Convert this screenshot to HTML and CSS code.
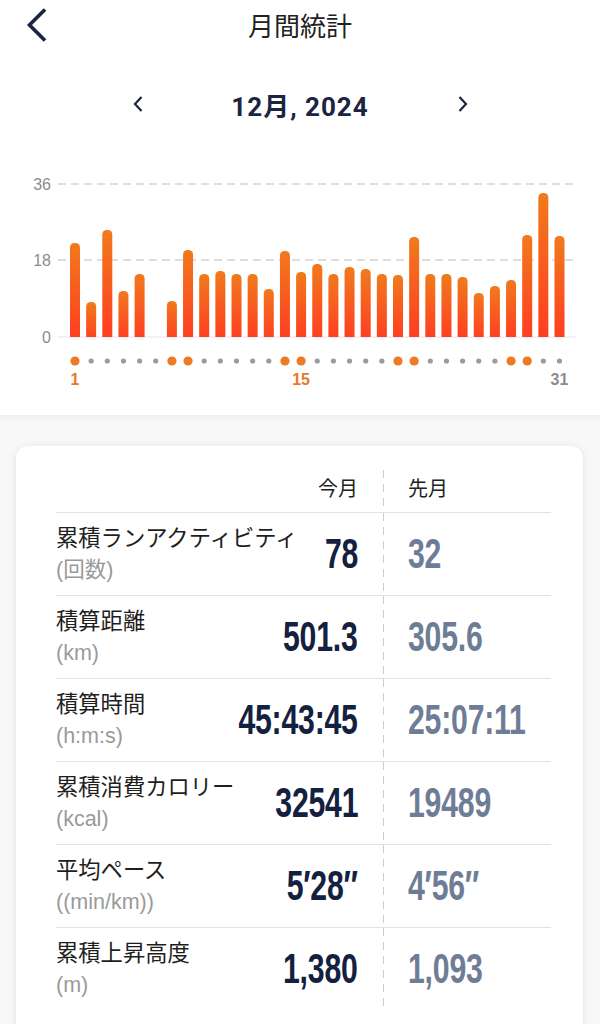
FILE: index.html
```html
<!DOCTYPE html>
<html lang="ja">
<head>
<meta charset="utf-8">
<title>月間統計</title>
<link rel="stylesheet" href="styles.css">
</head>
<body>
<div class="top">
  <header class="nav">
    <div class="back">
      <svg width="22" height="34" viewBox="0 0 22 34"><path d="M19 1.5 L3.5 17 L19 32.5" fill="none" stroke="#1b2440" stroke-width="3.6"/></svg>
    </div>
    <h1 class="title">月間統計</h1>
    <div></div>
  </header>
  <div class="month">
    <svg width="12" height="18" viewBox="0 0 12 18"><path d="M9.5 2 L3 9 L9.5 16" fill="none" stroke="#1b2440" stroke-width="2.2"/></svg>
    <span class="month-text">12月, 2024</span>
    <svg width="12" height="18" viewBox="0 0 12 18"><path d="M2.5 2 L9 9 L2.5 16" fill="none" stroke="#1b2440" stroke-width="2.2"/></svg>
  </div>
  <svg class="chart" width="600" height="275" viewBox="0 0 600 275">
    <defs>
      <linearGradient id="bar" x1="0" y1="0" x2="0" y2="1">
        <stop offset="0" stop-color="#f17a1c"/>
        <stop offset="1" stop-color="#ff3b22"/>
      </linearGradient>
      <clipPath id="clip"><rect x="0" y="0" width="600" height="211"/></clipPath>
    </defs>
    <g class="ylab">
      <text x="51" y="64">36</text>
      <text x="51" y="140">18</text>
      <text x="51" y="217">0</text>
    </g>
    <line x1="58" y1="58" x2="576" y2="58" class="grid"/>
    <line x1="58" y1="134" x2="576" y2="134" class="grid"/>
    <line x1="58" y1="211" x2="576" y2="211" class="base"/>
    <g clip-path="url(#clip)" fill="url(#bar)">
      <rect x="70" y="117" width="10" height="99" rx="4.5"/>
      <rect x="86.15" y="176" width="10" height="40" rx="4.5"/>
      <rect x="102.3" y="104" width="10" height="112" rx="4.5"/>
      <rect x="118.45" y="165" width="10" height="51" rx="4.5"/>
      <rect x="134.6" y="148" width="10" height="68" rx="4.5"/>
      <rect x="166.9" y="175" width="10" height="41" rx="4.5"/>
      <rect x="183.05" y="124" width="10" height="92" rx="4.5"/>
      <rect x="199.2" y="148" width="10" height="68" rx="4.5"/>
      <rect x="215.35" y="145" width="10" height="71" rx="4.5"/>
      <rect x="231.5" y="148" width="10" height="68" rx="4.5"/>
      <rect x="247.65" y="148" width="10" height="68" rx="4.5"/>
      <rect x="263.8" y="163" width="10" height="53" rx="4.5"/>
      <rect x="279.95" y="125" width="10" height="91" rx="4.5"/>
      <rect x="296.1" y="146" width="10" height="70" rx="4.5"/>
      <rect x="312.25" y="138" width="10" height="78" rx="4.5"/>
      <rect x="328.4" y="148" width="10" height="68" rx="4.5"/>
      <rect x="344.55" y="141" width="10" height="75" rx="4.5"/>
      <rect x="360.7" y="143" width="10" height="73" rx="4.5"/>
      <rect x="376.85" y="148" width="10" height="68" rx="4.5"/>
      <rect x="393" y="149" width="10" height="67" rx="4.5"/>
      <rect x="409.15" y="111" width="10" height="105" rx="4.5"/>
      <rect x="425.3" y="148" width="10" height="68" rx="4.5"/>
      <rect x="441.45" y="148" width="10" height="68" rx="4.5"/>
      <rect x="457.6" y="151" width="10" height="65" rx="4.5"/>
      <rect x="473.75" y="167" width="10" height="49" rx="4.5"/>
      <rect x="489.9" y="160" width="10" height="56" rx="4.5"/>
      <rect x="506.05" y="154" width="10" height="62" rx="4.5"/>
      <rect x="522.2" y="109" width="10" height="107" rx="4.5"/>
      <rect x="538.35" y="67" width="10" height="149" rx="4.5"/>
      <rect x="554.5" y="110" width="10" height="106" rx="4.5"/>
    </g>
    <g class="dots">
      <circle cx="75" cy="235" r="4.6" class="we"/>
      <circle cx="91.15" cy="235" r="2.6"/>
      <circle cx="107.3" cy="235" r="2.6"/>
      <circle cx="123.45" cy="235" r="2.6"/>
      <circle cx="139.6" cy="235" r="2.6"/>
      <circle cx="155.75" cy="235" r="2.6"/>
      <circle cx="171.9" cy="235" r="4.6" class="we"/>
      <circle cx="188.05" cy="235" r="4.6" class="we"/>
      <circle cx="204.2" cy="235" r="2.6"/>
      <circle cx="220.35" cy="235" r="2.6"/>
      <circle cx="236.5" cy="235" r="2.6"/>
      <circle cx="252.65" cy="235" r="2.6"/>
      <circle cx="268.8" cy="235" r="2.6"/>
      <circle cx="284.95" cy="235" r="4.6" class="we"/>
      <circle cx="301.1" cy="235" r="4.6" class="we"/>
      <circle cx="317.25" cy="235" r="2.6"/>
      <circle cx="333.4" cy="235" r="2.6"/>
      <circle cx="349.55" cy="235" r="2.6"/>
      <circle cx="365.7" cy="235" r="2.6"/>
      <circle cx="381.85" cy="235" r="2.6"/>
      <circle cx="398" cy="235" r="4.6" class="we"/>
      <circle cx="414.15" cy="235" r="4.6" class="we"/>
      <circle cx="430.3" cy="235" r="2.6"/>
      <circle cx="446.45" cy="235" r="2.6"/>
      <circle cx="462.6" cy="235" r="2.6"/>
      <circle cx="478.75" cy="235" r="2.6"/>
      <circle cx="494.9" cy="235" r="2.6"/>
      <circle cx="511.05" cy="235" r="4.6" class="we"/>
      <circle cx="527.2" cy="235" r="4.6" class="we"/>
      <circle cx="543.35" cy="235" r="2.6"/>
      <circle cx="559.5" cy="235" r="2.6"/>
    </g>
    <g class="xlab">
      <text x="75" y="259" class="o">1</text>
      <text x="301.1" y="259" class="o">15</text>
      <text x="559.5" y="259" class="g">31</text>
    </g>
  </svg>
</div>
<main class="bottom">
  <section class="card">
    <div class="row head">
      <span></span>
      <span class="h-cur">今月</span>
      <span class="div"></span>
      <span class="h-prev">先月</span>
    </div>
    <div class="row">
      <div class="lbl"><div class="name">累積ランアクティビティ</div><div class="unit">(回数)</div></div>
      <div class="cur"><span>78</span></div>
      <div class="div"></div>
      <div class="prev"><span>32</span></div>
    </div>
    <div class="row">
      <div class="lbl"><div class="name">積算距離</div><div class="unit">(km)</div></div>
      <div class="cur"><span>501.3</span></div>
      <div class="div"></div>
      <div class="prev"><span>305.6</span></div>
    </div>
    <div class="row">
      <div class="lbl"><div class="name">積算時間</div><div class="unit">(h:m:s)</div></div>
      <div class="cur"><span>45:43:45</span></div>
      <div class="div"></div>
      <div class="prev"><span>25:07:11</span></div>
    </div>
    <div class="row">
      <div class="lbl"><div class="name">累積消費カロリー</div><div class="unit">(kcal)</div></div>
      <div class="cur"><span>32541</span></div>
      <div class="div"></div>
      <div class="prev"><span>19489</span></div>
    </div>
    <div class="row">
      <div class="lbl"><div class="name">平均ペース</div><div class="unit">((min/km))</div></div>
      <div class="cur"><span>5′28″</span></div>
      <div class="div"></div>
      <div class="prev"><span>4′56″</span></div>
    </div>
    <div class="row">
      <div class="lbl"><div class="name">累積上昇高度</div><div class="unit">(m)</div></div>
      <div class="cur"><span>1,380</span></div>
      <div class="div"></div>
      <div class="prev"><span>1,093</span></div>
    </div>
  </section>
</main>
</body>
</html>
```
FILE: styles.css
```css
* { box-sizing: border-box; }
html, body { margin: 0; padding: 0; }
body {
  width: 600px;
  height: 1024px;
  overflow: hidden;
  background: #f8f8f8;
  font-family: "Liberation Sans", "Noto Sans CJK JP", sans-serif;
  color: #1e1e1e;
}
.top {
  background: #fff;
  padding-bottom: 14px;
}
.nav {
  height: 50px;
  display: grid;
  grid-template-columns: 1fr auto 1fr;
  align-items: center;
}
.back {
  padding-left: 26px;
  display: flex;
  align-items: center;
}
.title {
  margin: 0;
  font-family: "Noto Sans CJK JP", sans-serif;
  font-weight: 400;
  font-size: 26px;
  line-height: 50px;
  color: #222;
}
.month {
  width: 337px;
  height: 44px;
  margin: 32px auto 0;
  display: flex;
  justify-content: space-between;
  align-items: center;
}
.month-text {
  font-family: "Roboto", "Noto Sans CJK JP", sans-serif;
  font-weight: 700;
  font-size: 26px;
  letter-spacing: 1px;
  color: #1b2440;
}
.chart { display: block; }
.ylab text {
  font-family: "Liberation Sans", sans-serif;
  font-size: 16px;
  fill: #8c8c8c;
  text-anchor: end;
}
.grid { stroke: #bdbdbd; stroke-width: 1; stroke-dasharray: 8 5; }
.base { stroke: #e4e4e4; stroke-width: 1; }
.dots circle { fill: #9b9b9b; }
.dots circle.we { fill: #ef7a24; }
.xlab text {
  font-family: "Liberation Sans", sans-serif;
  font-size: 16px;
  font-weight: 700;
  text-anchor: middle;
}
.xlab .o { fill: #e9772a; }
.xlab .g { fill: #8c8c8c; }
.bottom {
  padding: 31px 17px 0 16px;
  box-shadow: inset 0 9px 10px -8px rgba(0, 0, 0, 0.07);
  height: 609px;
}
.card {
  background: #fff;
  border-radius: 12px;
  box-shadow: 0 1px 9px rgba(0, 0, 0, 0.09);
  padding: 24px 32px 20px 40px;
  min-height: 600px;
}
.row {
  display: grid;
  grid-template-columns: 1fr auto 50px 143px;
  height: 83px;
  border-top: 1px solid #e2e2e2;
}
.row.head {
  height: 42px;
  border-top: none;
  font-family: "Noto Sans CJK JP", sans-serif;
  font-size: 20px;
  line-height: 36px;
  color: #222;
}
.h-cur { text-align: right; }
.div {
  background: repeating-linear-gradient(to bottom, #cdcdcd 0 8px, transparent 8px 14px) center / 1px 100% no-repeat;
}
.lbl { padding-top: 8px; }
.name {
  font-family: "Noto Sans CJK JP", sans-serif;
  font-size: 22.3px;
  line-height: 30px;
  color: #1e1e1e;
  white-space: nowrap;
}
.unit {
  margin-top: 4px;
  font-family: "Liberation Sans", "Noto Sans CJK JP", sans-serif;
  font-size: 21.5px;
  line-height: 30px;
  color: #9a9a9a;
  white-space: nowrap;
}
.cur, .prev {
  display: flex;
  align-items: center;
  font-family: "Liberation Sans", sans-serif;
  font-weight: 700;
  font-size: 42px;
  letter-spacing: -0.3px;
}
.cur { justify-content: flex-end; color: #14203f; }
.prev { justify-content: flex-start; color: #6e7d96; }
.cur span, .prev span {
  display: inline-block;
  transform: scaleX(0.72);
}
.cur span { transform-origin: right center; }
.prev span { transform-origin: left center; }
```
